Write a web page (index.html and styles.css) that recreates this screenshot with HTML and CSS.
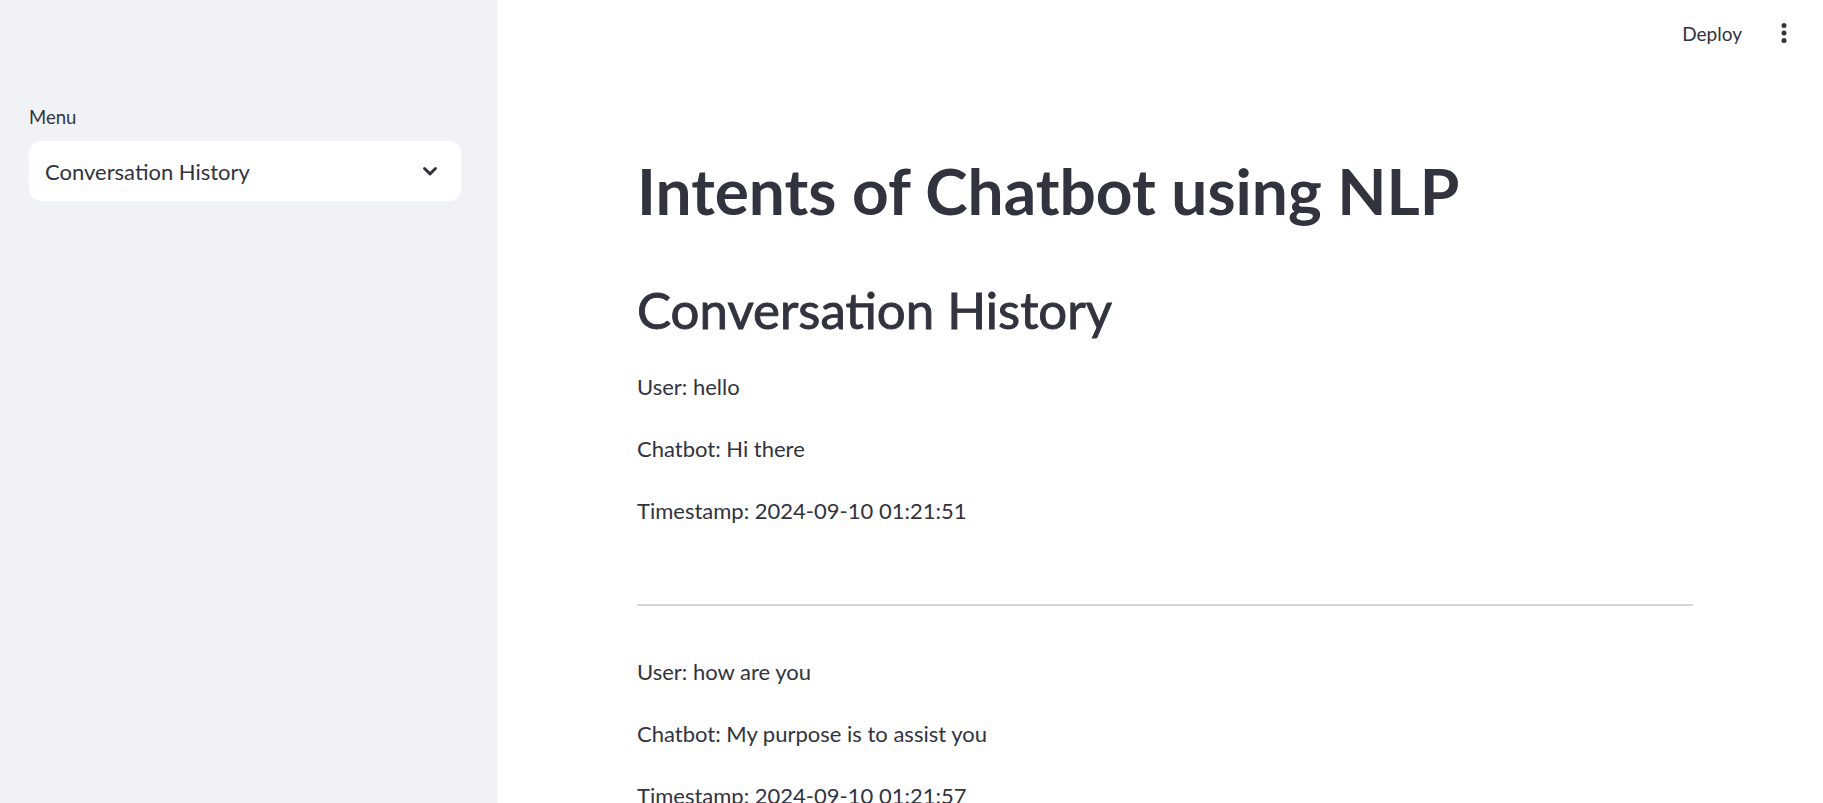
FILE: index.html
```html
<!DOCTYPE html>
<html>
<head>
<meta charset="utf-8">
<link rel="stylesheet" href="styles.css">
</head>
<body>
<div class="app">
  <aside class="sidebar">
    <div class="sb-content">
      <div class="widget-label">Menu</div>
      <div class="select">
        <span class="select-value">Conversation History</span>
        <svg class="chevron" viewBox="0 0 24 24" width="28" height="28"><path d="M7.3 9.9L12 14.5l4.7-4.6" fill="none" stroke="#31333f" stroke-width="2.5" stroke-linecap="round" stroke-linejoin="round"/></svg>
      </div>
    </div>
  </aside>
  <main class="main">
    <header class="topbar">
      <span class="deploy">Deploy</span>
      <span class="menu-btn">
        <svg viewBox="0 0 10 24" width="10" height="24"><circle cx="5" cy="4.5" r="2.5" fill="#31333f"/><circle cx="5" cy="12" r="2.5" fill="#31333f"/><circle cx="5" cy="19.5" r="2.5" fill="#31333f"/></svg>
      </span>
    </header>
    <section class="block">
      <h1 class="title">Intents of Chatbot using NLP</h1>
      <h2 class="subtitle">Conversation History</h2>
      <p class="line">User: hello</p>
      <p class="line">Chatbot: Hi there</p>
      <p class="line">Timestamp: 2024-09-10 01:21:51</p>
      <hr class="divider">
      <p class="line">User: how are you</p>
      <p class="line">Chatbot: My purpose is to assist you</p>
      <p class="line">Timestamp: 2024-09-10 01:21:57</p>
    </section>
  </main>
</div>
</body>
</html>
```
FILE: styles.css
```css
html, body {
  margin: 0;
  padding: 0;
  height: 100%;
  overflow: hidden;
  background: #ffffff;
  color: #31333f;
  font-family: "Lato", "Noto Sans", sans-serif;
}
.app {
  display: flex;
  height: 803px;
}
.sidebar {
  width: 497px;
  flex: none;
  background: #f0f2f6;
}
.sb-content {
  padding: 103px 36px 0 29px;
}
.widget-label {
  font-size: 18.5px;
  line-height: 28px;
  margin-bottom: 10px;
}
.select {
  width: 432px;
  height: 60px;
  box-sizing: border-box;
  background: #ffffff;
  border-radius: 12px;
  display: flex;
  align-items: center;
  justify-content: space-between;
  padding: 0 17px 0 16px;
}
.select-value {
  font-size: 22px;
}
.chevron {
  display: block;
}
.main {
  flex: 1;
  background: #ffffff;
}
.topbar {
  height: 66px;
  display: flex;
  align-items: center;
  justify-content: flex-end;
  padding-right: 24px;
}
.deploy {
  font-size: 19px;
  margin-right: 27px;
}
.menu-btn {
  width: 30px;
  display: flex;
  justify-content: center;
}
.menu-btn svg { display: block; }
.block {
  width: 1056px;
  margin-left: 140px;
  padding-top: 85px;
}
.title {
  margin: 0;
  font-size: 64px;
  font-weight: 700;
  line-height: 80px;
}
.subtitle {
  margin: 48px 0 0;
  font-size: 51px;
  font-weight: 400;
  line-height: 62px;
  -webkit-text-stroke: 0.9px #31333f;
}
.line {
  margin: 24px 0 0;
  font-size: 22px;
  line-height: 38px;
}
.subtitle + .line {
  margin-top: 27px;
}
.divider {
  margin: 74px 0 0;
  border: none;
  height: 2px;
  background: #d6d6d9;
}
.divider + .line {
  margin-top: 47px;
}
```
